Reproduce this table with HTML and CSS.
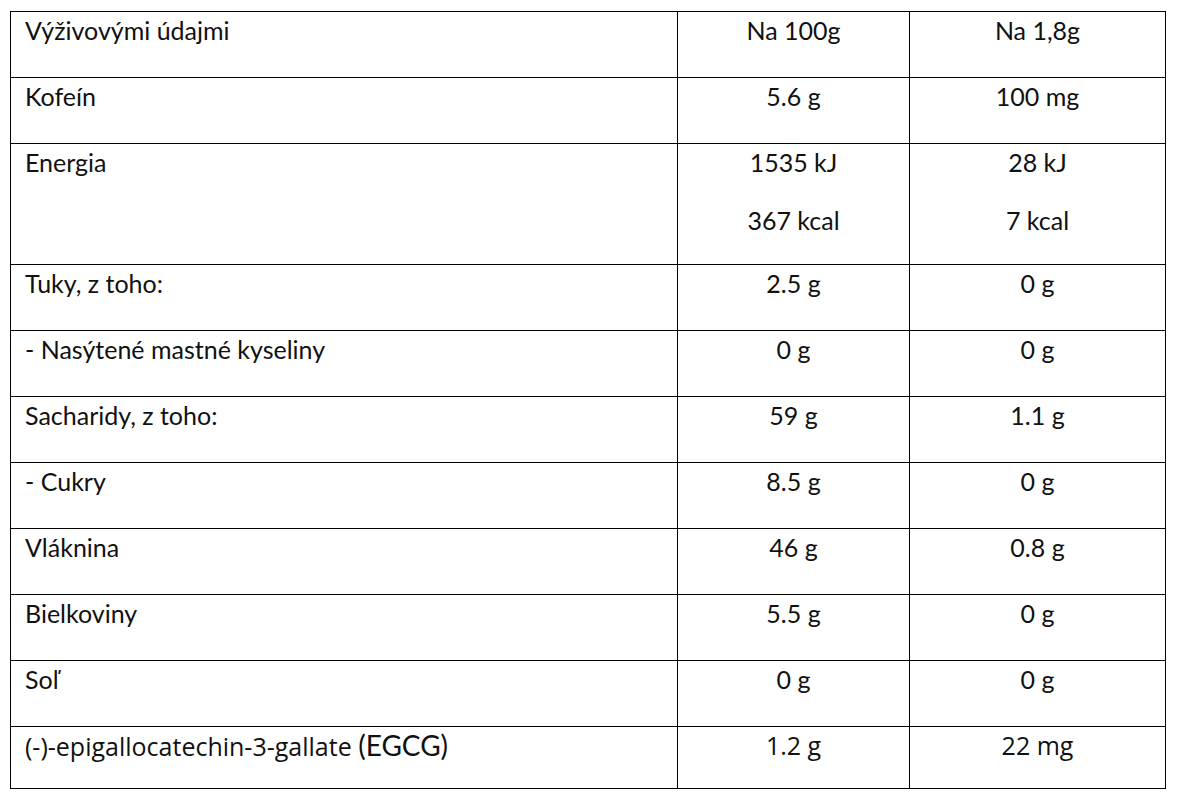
FILE: index.html
```html
<!DOCTYPE html>
<html lang="sk">
<head>
<meta charset="utf-8">
<title>Výživové údaje</title>
<link rel="stylesheet" href="styles.css">
</head>
<body>
<table class="nutri">
  <colgroup>
    <col class="c1"><col class="c2"><col class="c3">
  </colgroup>
  <tbody>
    <tr><td><p>Výživovými údajmi</p></td><td class="num"><p>Na 100g</p></td><td class="num"><p>Na 1,8g</p></td></tr>
    <tr><td><p>Kofeín</p></td><td class="num"><p>5.6 g</p></td><td class="num"><p>100 mg</p></td></tr>
    <tr class="double"><td><p>Energia</p></td><td class="num"><p>1535 kJ</p><p>367 kcal</p></td><td class="num"><p>28 kJ</p><p>7 kcal</p></td></tr>
    <tr><td><p>Tuky, z toho:</p></td><td class="num"><p>2.5 g</p></td><td class="num"><p>0 g</p></td></tr>
    <tr><td><p>- Nasýtené mastné kyseliny</p></td><td class="num"><p>0 g</p></td><td class="num"><p>0 g</p></td></tr>
    <tr><td><p>Sacharidy, z toho:</p></td><td class="num"><p>59 g</p></td><td class="num"><p>1.1 g</p></td></tr>
    <tr><td><p>- Cukry</p></td><td class="num"><p>8.5 g</p></td><td class="num"><p>0 g</p></td></tr>
    <tr><td><p>Vláknina</p></td><td class="num"><p>46 g</p></td><td class="num"><p>0.8 g</p></td></tr>
    <tr><td><p>Bielkoviny</p></td><td class="num"><p>5.5 g</p></td><td class="num"><p>0 g</p></td></tr>
    <tr><td><p>Soľ</p></td><td class="num"><p>0 g</p></td><td class="num"><p>0 g</p></td></tr>
    <tr class="alt"><td><p>(-)-epigallocatechin-3-gallate <span class="abbr">(EGCG)</span></p></td><td class="num"><p>1.2 g</p></td><td class="num"><p>22 mg</p></td></tr>
  </tbody>
</table>
</body>
</html>
```
FILE: styles.css
```css
html, body {
  margin: 0;
  background: #fff;
}
body {
  padding: 11px 10px 0 10px;
  font-family: Lato, "Open Sans", sans-serif;
  color: #111;
}
.nutri {
  border-collapse: collapse;
  table-layout: fixed;
  width: 1155px;
}
.c1 { width: 667px; }
.c2 { width: 232px; }
.c3 { width: 256px; }
.nutri td {
  border: 1px solid #000;
  vertical-align: top;
  padding: 4px 14px 33px 14px;
  font-size: 25px;
  height: 28px;
}
.nutri td.num {
  text-align: center;
}
.nutri p {
  margin: 0;
  line-height: 28px;
}
.nutri p + p {
  margin-top: 30px;
}
.double td {
  padding-bottom: 30px;
}
.alt td {
  font-family: "Open Sans", sans-serif;
  font-size: 25px;
  padding-bottom: 28px;
}
.abbr {
  font-family: Lato, sans-serif;
  font-size: 28px;
}
```
